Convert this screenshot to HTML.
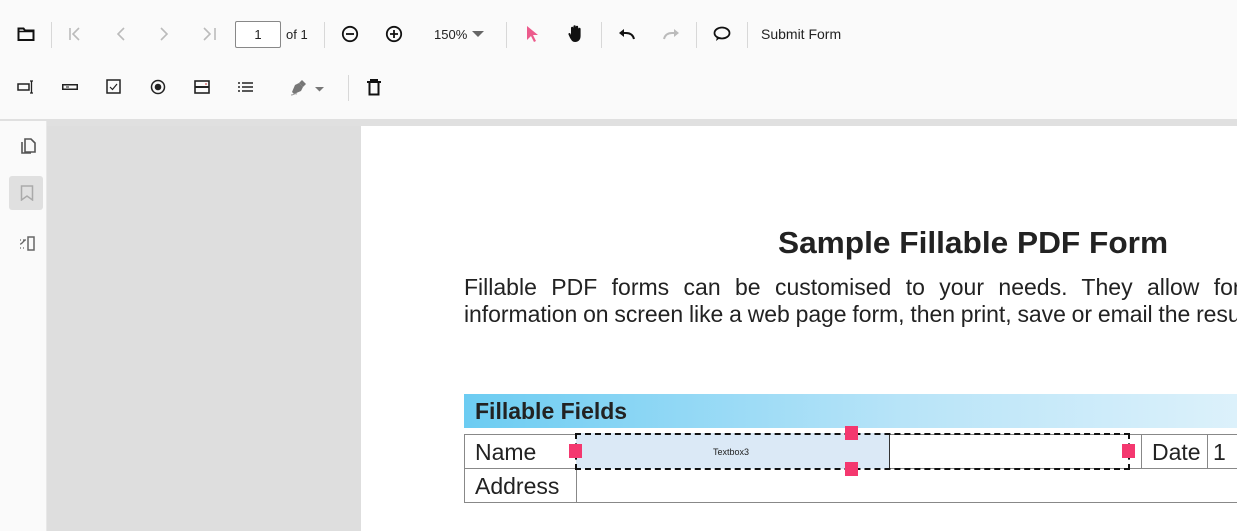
<!DOCTYPE html>
<html style="width:1237px;height:531px;overflow:hidden"><head><style>
*{margin:0;padding:0;box-sizing:border-box}
body{width:1237px;height:531px;overflow:hidden;background:#dedede;font-family:"Liberation Sans",sans-serif;position:relative}
.tb{position:absolute;left:0;top:0;width:1237px;height:119px;background:#fafafa}
.strip{position:absolute;left:0;top:119px;width:1237px;height:7px;background:#e0e0e0}
.side{position:absolute;left:0;top:121px;width:47px;height:410px;background:#fafafa;border-right:1px solid #e8e8e8}
.ico{position:absolute}
.sep{position:absolute;width:1px;height:26px;background:#d8d8d8}
.page{position:absolute;left:361px;top:126px;width:876px;height:405px;background:#fff;overflow:hidden}
.abs{position:absolute;white-space:nowrap;color:#222}
</style></head><body>
<div class="tb">
<svg class="ico" style="left:17px;top:26px" width="18" height="16" viewBox="0 0 18 16"><path d="M1.5 2.5h5l1.5 2h8.5v9.5h-15z" fill="none" stroke="#111" stroke-width="2"/><path d="M1.5 5.5h15" stroke="#111" stroke-width="1.5"/></svg>
<div class="sep" style="left:51px;top:22px"></div>
<svg class="ico" style="left:68px;top:27px" width="16" height="14"><path d="M2 1v12M11 1l-6 6 6 6" fill="none" stroke="#bbb" stroke-width="1.6"/></svg>
<svg class="ico" style="left:115px;top:27px" width="12" height="14"><path d="M9 1l-6 6 6 6" fill="none" stroke="#bbb" stroke-width="1.6"/></svg>
<svg class="ico" style="left:158px;top:27px" width="12" height="14"><path d="M3 1l6 6-6 6" fill="none" stroke="#bbb" stroke-width="1.6"/></svg>
<svg class="ico" style="left:202px;top:27px" width="16" height="14"><path d="M2 1l6 6-6 6M13 1v12" fill="none" stroke="#bbb" stroke-width="1.6"/></svg>
<div style="position:absolute;left:235px;top:21px;width:46px;height:27px;border:1px solid #888;border-radius:2px;background:#fff;font-size:13px;text-align:center;line-height:25px;color:#222">1</div>
<div class="abs" style="left:286px;top:27px;font-size:13px">of 1</div>
<div class="sep" style="left:324px;top:22px"></div>
<svg class="ico" style="left:341px;top:25px" width="18" height="18"><circle cx="9" cy="9" r="7.2" fill="none" stroke="#111" stroke-width="1.8"/><path d="M5 9h8" stroke="#111" stroke-width="1.8"/></svg>
<svg class="ico" style="left:385px;top:25px" width="18" height="18"><circle cx="9" cy="9" r="7.2" fill="none" stroke="#111" stroke-width="1.8"/><path d="M5 9h8M9 5v8" stroke="#111" stroke-width="1.8"/></svg>
<div class="abs" style="left:434px;top:27px;font-size:13px">150%</div>
<svg class="ico" style="left:472px;top:31px" width="12" height="7"><path d="M0 0h12L6 6z" fill="#666"/></svg>
<div class="sep" style="left:506px;top:22px"></div>
<svg class="ico" style="left:526px;top:25px" width="14" height="18"><path d="M1 1l11 9h-5l3 6-2 1-3-6-4 4z" fill="#ec5b8c"/></svg>
<svg class="ico" style="left:567px;top:24px" width="18" height="19"><path d="M4 8V4a1.2 1.2 0 0 1 2.4 0V8V2.5a1.2 1.2 0 0 1 2.4 0V8V3a1.2 1.2 0 0 1 2.4 0V8V5a1.2 1.2 0 0 1 2.4 0v7c0 4-2.5 6-5.5 6-2.5 0-3.5-1.5-5-4L1.5 10.5c-.5-1 .8-2 1.7-1.2L4 11z" fill="#111"/></svg>
<div class="sep" style="left:601px;top:22px"></div>
<svg class="ico" style="left:618px;top:28px" width="18" height="12"><path d="M16 11c-1-4-4-6-8-6H3" fill="none" stroke="#111" stroke-width="2"/><path d="M1 5l5-4v8z" fill="#111"/></svg>
<svg class="ico" style="left:662px;top:28px" width="18" height="12"><path d="M2 11c1-4 4-6 8-6h5" fill="none" stroke="#bbb" stroke-width="2"/><path d="M17 5l-5-4v8z" fill="#bbb"/></svg>
<div class="sep" style="left:696px;top:22px"></div>
<svg class="ico" style="left:713px;top:26px" width="18" height="16"><ellipse cx="9" cy="7" rx="7.5" ry="5.5" fill="none" stroke="#111" stroke-width="1.8"/><path d="M4 11l-1 4 4-3" fill="#111"/></svg>
<div class="sep" style="left:747px;top:22px"></div>
<div class="abs" style="left:761px;top:26px;font-size:14px">Submit Form</div>

<svg class="ico" style="left:17px;top:80px" width="18" height="14"><rect x="1" y="4" width="11" height="6" fill="none" stroke="#222" stroke-width="1.5"/><path d="M13 1h3M14.5 1v12M13 13h3" stroke="#222" stroke-width="1.3" fill="none"/></svg>
<svg class="ico" style="left:62px;top:84px" width="16" height="6"><rect x=".75" y=".75" width="14.5" height="4.5" fill="none" stroke="#222" stroke-width="1.5"/><path d="M4 3h3" stroke="#222"/></svg>
<svg class="ico" style="left:106px;top:79px" width="16" height="16"><rect x="1" y="1" width="13" height="13" fill="none" stroke="#222" stroke-width="1.5"/><path d="M4 8l2.5 2.5L11 5" fill="none" stroke="#222" stroke-width="1.2"/></svg>
<svg class="ico" style="left:150px;top:79px" width="16" height="16"><circle cx="8" cy="8" r="6.5" fill="none" stroke="#222" stroke-width="1.5"/><circle cx="8" cy="8" r="3.3" fill="#222"/></svg>
<svg class="ico" style="left:194px;top:80px" width="16" height="14"><rect x="1" y="1" width="14" height="12" fill="none" stroke="#222" stroke-width="1.6"/><path d="M1 7h14" stroke="#222" stroke-width="2"/><path d="M11 4h2" stroke="#c33"/></svg>
<svg class="ico" style="left:238px;top:82px" width="15" height="10"><path d="M0 1h2M4 1h11M0 5h2M4 5h11M0 9h2M4 9h11" stroke="#222" stroke-width="1.5"/></svg>
<svg class="ico" style="left:289px;top:79px" width="18" height="18"><path d="M3 13l3-7 4-2 4 4-2 4-7 3z" fill="#777"/><path d="M10 4l3-3 4 4-3 3z" fill="#777"/><path d="M2 16c3 0 3-2 6-1" stroke="#999" fill="none"/></svg>
<svg class="ico" style="left:315px;top:87px" width="9" height="5"><path d="M0 0h9L4.5 4.5z" fill="#777"/></svg>
<div class="sep" style="left:348px;top:75px"></div>
<svg class="ico" style="left:366px;top:79px" width="16" height="17"><path d="M1 3h14M5 3V1h6v2" fill="none" stroke="#111" stroke-width="2"/><path d="M3.5 3.5v12h9v-12" fill="none" stroke="#111" stroke-width="2"/></svg>
</div>
<div class="strip"></div>
<div class="side">
<svg class="ico" style="left:20px;top:17px" width="16" height="17"><path d="M5 1h6l4 4v9H5z" fill="none" stroke="#555" stroke-width="1.6"/><path d="M2 4v11h9" fill="none" stroke="#555" stroke-width="1.6"/></svg>
<div style="position:absolute;left:9px;top:55px;width:34px;height:34px;background:#e0e0e0;border-radius:3px"></div>
<svg class="ico" style="left:20px;top:64px" width="14" height="16"><path d="M1.5 1h11v14l-5.5-4-5.5 4z" fill="none" stroke="#aaa" stroke-width="1.5"/></svg>
<svg class="ico" style="left:19px;top:115px" width="17" height="15"><rect x="9" y="1" width="6" height="13" fill="none" stroke="#666" stroke-width="1.5"/><path d="M1 4h1M1 8h1M1 12h1M4 12h1M4 4l3 0M6 4L2 8" stroke="#666" stroke-width="1.3" fill="none"/></svg>
</div>
<div class="page">
<div class="abs" style="left:417px;top:99px;font-size:31px;font-weight:bold;transform:scaleX(1.02);transform-origin:left">Sample Fillable PDF Form</div>
<div class="abs" style="left:103px;top:148px;font-size:23px;word-spacing:8px">Fillable PDF forms can be customised to your needs. They allow for</div>
<div class="abs" style="left:103px;top:175px;font-size:23px;letter-spacing:-0.05px;word-spacing:-0.5px">information on screen like a web page form, then print, save or email the results</div>
<div style="position:absolute;left:103px;top:268px;width:800px;height:34px;background:linear-gradient(90deg,#6cccf2,#b8e4f8 55%,#dff2fb)"></div>
<div class="abs" style="left:114px;top:272px;font-size:23px;font-weight:bold">Fillable Fields</div>
<div style="position:absolute;left:103px;top:308px;width:800px;height:69px;border:1px solid #888;border-right:none"></div>
<div style="position:absolute;left:103px;top:342px;width:800px;height:1px;background:#888"></div>
<div style="position:absolute;left:215px;top:308px;width:1px;height:69px;background:#888"></div>
<div style="position:absolute;left:780px;top:308px;width:1px;height:34px;background:#888"></div>
<div style="position:absolute;left:846px;top:308px;width:1px;height:34px;background:#888"></div>
<div class="abs" style="left:114px;top:313px;font-size:23px">Name</div>
<div class="abs" style="left:114px;top:347px;font-size:23px">Address</div>
<div class="abs" style="left:791px;top:313px;font-size:23px">Date</div>
<div class="abs" style="left:852px;top:313px;font-size:23px">1</div>
<div style="position:absolute;left:215px;top:307px;width:314px;height:36px;background:#dbe9f6;border-right:1px solid #333"></div>
<div class="abs" style="left:352px;top:321px;font-size:9px">Textbox3</div>
<div style="position:absolute;left:214px;top:307px;width:555px;height:37px;border:2px dashed #111"></div>
<div style="position:absolute;left:208px;top:318px;width:13px;height:14px;background:#f4386f"></div>
<div style="position:absolute;left:761px;top:318px;width:13px;height:14px;background:#f4386f"></div>
<div style="position:absolute;left:484px;top:300px;width:13px;height:14px;background:#f4386f"></div>
<div style="position:absolute;left:484px;top:336px;width:13px;height:14px;background:#f4386f"></div>
</div>
</body></html>
